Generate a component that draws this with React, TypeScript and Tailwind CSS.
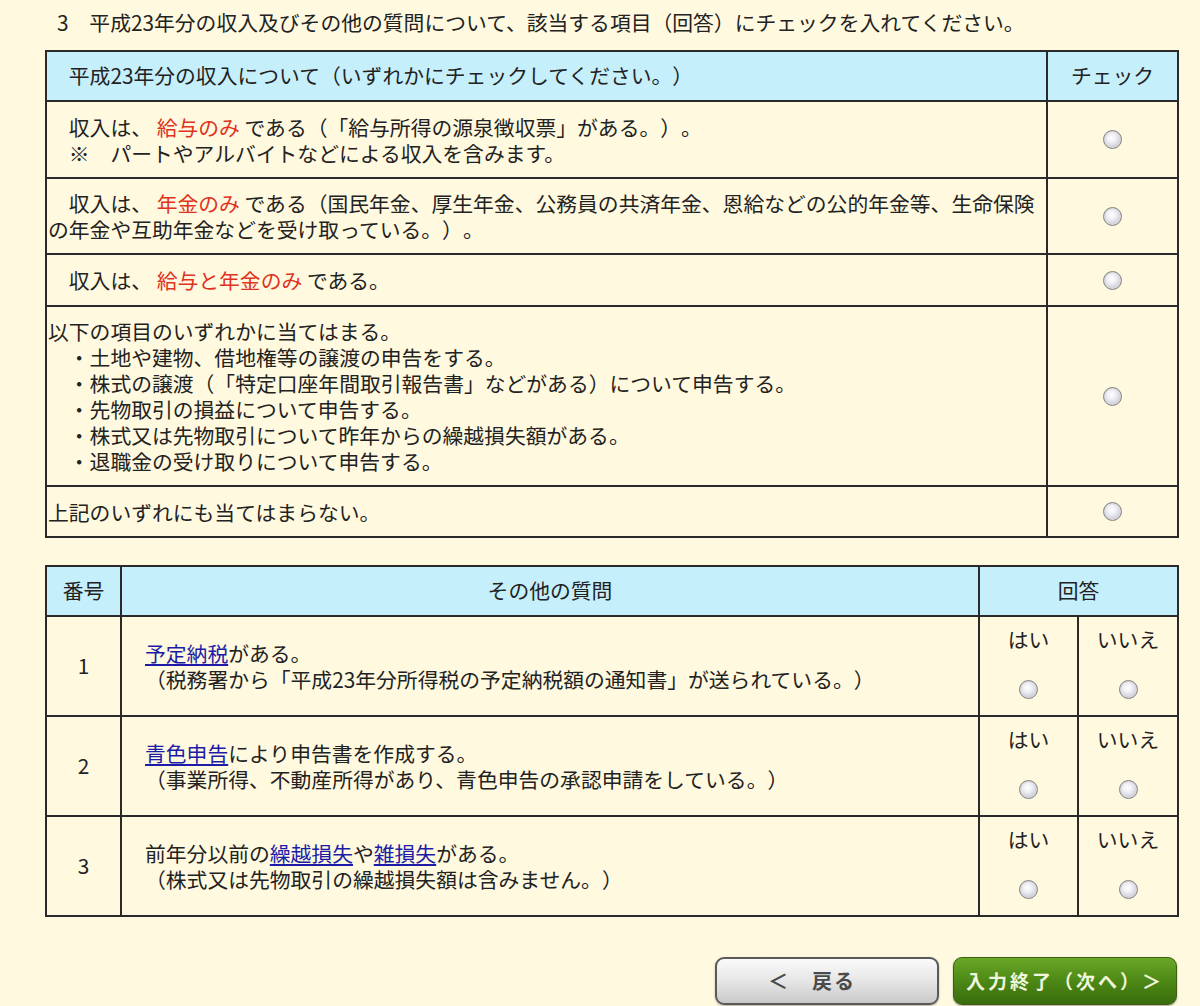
import type { ReactNode } from "react";

const SP = "\u3000";

function Radio() {
  return (
    <span className="inline-block h-[19px] w-[19px] rounded-full border border-[#858585] bg-[radial-gradient(circle_at_45%_40%,#ffffff_0%,#f0f0f6_30%,#b4b4c0_100%)] shadow-[inset_0_0_0_1px_#d8d8d8]" />
  );
}

function Red({ children }: { children: ReactNode }) {
  return <span className="text-[#e0321e]">{children}</span>;
}

function A({ children }: { children: ReactNode }) {
  return <a className="text-[#1c1ca8] underline underline-offset-2">{children}</a>;
}

const incomeRows: { h: string; body: ReactNode }[] = [
  {
    h: "h-[77px]",
    body: (
      <>
        {SP}収入は、 <Red>給与のみ</Red> である（「給与所得の源泉徴収票」がある。）。
        <br />
        {SP}※{SP}パートやアルバイトなどによる収入を含みます。
      </>
    ),
  },
  {
    h: "h-[76px]",
    body: (
      <>
        {SP}収入は、 <Red>年金のみ</Red> である（国民年金、厚生年金、公務員の共済年金、恩給などの公的年金等、生命保険
        <br />
        の年金や互助年金などを受け取っている。）。
      </>
    ),
  },
  {
    h: "h-[52px]",
    body: (
      <>
        {SP}収入は、 <Red>給与と年金のみ</Red> である。
      </>
    ),
  },
  {
    h: "h-[180px]",
    body: (
      <>
        以下の項目のいずれかに当てはまる。
        <br />
        {SP}・土地や建物、借地権等の譲渡の申告をする。
        <br />
        {SP}・株式の譲渡（「特定口座年間取引報告書」などがある）について申告する。
        <br />
        {SP}・先物取引の損益について申告する。
        <br />
        {SP}・株式又は先物取引について昨年からの繰越損失額がある。
        <br />
        {SP}・退職金の受け取りについて申告する。
      </>
    ),
  },
  { h: "h-[51px]", body: <>上記のいずれにも当てはまらない。</> },
];

const questions: { no: string; body: ReactNode }[] = [
  {
    no: "1",
    body: (
      <>
        <A>予定納税</A>がある。
        <br />
        （税務署から「平成23年分所得税の予定納税額の通知書」が送られている。）
      </>
    ),
  },
  {
    no: "2",
    body: (
      <>
        <A>青色申告</A>により申告書を作成する。
        <br />
        （事業所得、不動産所得があり、青色申告の承認申請をしている。）
      </>
    ),
  },
  {
    no: "3",
    body: (
      <>
        前年分以前の<A>繰越損失</A>や<A>雑損失</A>がある。
        <br />
        （株式又は先物取引の繰越損失額は含みません。）
      </>
    ),
  },
];

const cell = "border-2 border-[#2a2a2a]";

export default function App() {
  return (
    <div className="min-h-[1006px] w-[1200px] bg-[#fff9df] text-[20.8px] text-[#222] [font-family:'Noto_Sans_CJK_JP',sans-serif] [text-spacing-trim:space-all]">
      <div className="pl-[45px] pt-[9px]">
        <p className="h-[26px] pl-[12px] leading-[26px]">
          3{SP}平成23年分の収入及びその他の質問について、該当する項目（回答）にチェックを入れてください。
        </p>

        <table className="mt-[15px] w-[1132px] table-fixed border-collapse">
          <colgroup>
            <col className="w-[1001px]" />
            <col className="w-[131px]" />
          </colgroup>
          <thead>
            <tr className="h-[50px] bg-[#c6effc]">
              <th className={`${cell} px-[1px] text-left font-normal`}>{SP}平成23年分の収入について（いずれかにチェックしてください。）</th>
              <th className={`${cell} text-center font-normal`}>チェック</th>
            </tr>
          </thead>
          <tbody>
            {incomeRows.map((r, i) => (
              <tr key={i} className={r.h}>
                <td className={`${cell} px-[1px] leading-[26px] whitespace-nowrap`}>{r.body}</td>
                <td className={`${cell} text-center align-middle`}>
                  <span className="flex justify-center">
                    <Radio />
                  </span>
                </td>
              </tr>
            ))}
          </tbody>
        </table>

        <table className="mt-[27px] w-[1132px] table-fixed border-collapse">
          <colgroup>
            <col className="w-[75px]" />
            <col className="w-[858px]" />
            <col className="w-[99px]" />
            <col className="w-[100px]" />
          </colgroup>
          <thead>
            <tr className="h-[50px] bg-[#c6effc]">
              <th className={`${cell} text-center font-normal`}>番号</th>
              <th className={`${cell} text-center font-normal`}>その他の質問</th>
              <th colSpan={2} className={`${cell} text-center font-normal`}>
                回答
              </th>
            </tr>
          </thead>
          <tbody>
            {questions.map((q) => (
              <tr key={q.no} className="h-[100px]">
                <td className={`${cell} text-center`}>{q.no}</td>
                <td className={`${cell} pl-[23px] leading-[26px] whitespace-nowrap`}>{q.body}</td>
                {["はい", "いいえ"].map((a) => (
                  <td key={a} className={`${cell} align-top`}>
                    <div className="flex h-[96px] flex-col items-center pt-[10px]">
                      <span className="leading-[24px]">{a}</span>
                      <span className="mt-[24px]">
                        <Radio />
                      </span>
                    </div>
                  </td>
                ))}
              </tr>
            ))}
          </tbody>
        </table>

        <div className="mt-[40px] flex w-[1132px] justify-end gap-[14px]">
          <button className="flex h-[48px] w-[224px] items-center justify-center rounded-[9px] border-2 border-[#5a5a5a] bg-[linear-gradient(#fafafa,#e6e6e6_50%,#c9c9c9)] pr-[30px] text-[20px] font-bold tracking-[2px] text-[#4a4a4a] shadow-[0_1px_2px_rgba(0,0,0,0.3)]">
            ＜{SP}戻る
          </button>
          <button className="flex h-[48px] w-[224px] items-center justify-center rounded-[9px] border border-[#3d5f12] bg-[linear-gradient(#6aa826,#4d8816_50%,#3a6c0c)] text-[19px] font-bold tracking-[3px] text-[#eef6dc] shadow-[0_1px_2px_rgba(0,0,0,0.35)]">
            入力終了（次へ）＞
          </button>
        </div>
      </div>
    </div>
  );
}
